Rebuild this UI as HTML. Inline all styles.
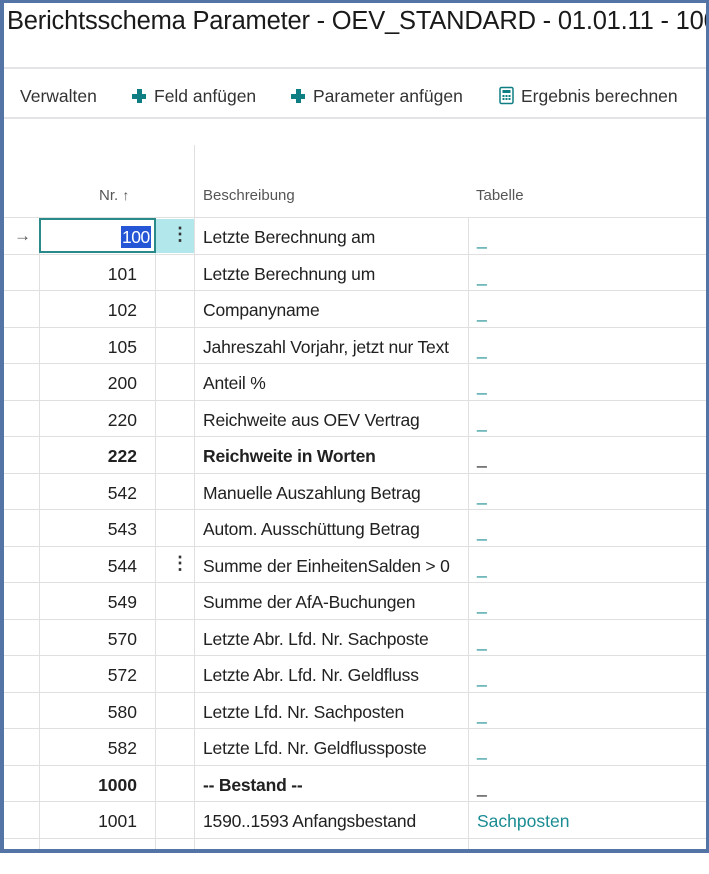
<!DOCTYPE html>
<html><head><meta charset="utf-8"><style>
*{margin:0;padding:0;box-sizing:border-box}
body{width:709px;height:853px;background:#fff;position:relative;overflow:hidden;font-family:"Liberation Sans",sans-serif;color:#212121}
.frame{position:absolute;left:0;top:0;width:709px;height:853px;border:4px solid #5574a6;border-right-width:3px;border-top-width:3px;z-index:10;pointer-events:none}
.title{position:absolute;left:7px;top:7px;font-size:25.5px;white-space:nowrap;color:#1a1a1a;letter-spacing:-0.2px}
.hl{position:absolute;left:4px;right:3px;height:2px;background:#e3e3e8}
.tb{position:absolute;top:86px;font-size:17.5px;white-space:nowrap;color:#333}
.plus{display:inline-block;position:relative;width:14px;height:14px;margin-right:8px;vertical-align:-1px}
.plus:before{content:"";position:absolute;left:4.5px;top:0;width:5px;height:14px;background:#0f7e83}
.plus:after{content:"";position:absolute;left:0;top:4.5px;width:14px;height:5px;background:#0f7e83}
.th{position:absolute;top:187px;font-size:15px;color:#555}
.vl{position:absolute;width:1px;background:#e0e0e0}
.row{position:absolute;left:4px;right:3px;height:36.5px;border-top:1.5px solid #e0e0e0}
.c{position:absolute;top:9px;font-size:17.5px;white-space:nowrap}
.b{font-weight:bold}
.t{color:#1a8c93}
</style></head><body>
<div class="frame"></div>
<div class="title">Berichtsschema Parameter - OEV_STANDARD - 01.01.11 - 1000</div>
<div class="hl" style="top:67px"></div>
<div class="tb" style="left:20px">Verwalten</div>
<div class="tb" style="left:132px"><span class="plus"></span>Feld anfügen</div>
<div class="tb" style="left:291px"><span class="plus"></span>Parameter anfügen</div>
<div class="tb" style="left:499px"><svg width="15" height="19" viewBox="0 0 15 18" style="vertical-align:-3px;margin-right:7px"><rect x="1" y="1" width="13" height="16" rx="1.5" fill="none" stroke="#0f7e83" stroke-width="1.5"/><rect x="3.5" y="3.5" width="8" height="3" fill="#0f7e83"/><g fill="#0f7e83"><rect x="3.5" y="8.5" width="2" height="2"/><rect x="6.5" y="8.5" width="2" height="2"/><rect x="9.5" y="8.5" width="2" height="2"/><rect x="3.5" y="11.5" width="2" height="2"/><rect x="6.5" y="11.5" width="2" height="2"/><rect x="9.5" y="11.5" width="2" height="2"/></g></svg>Ergebnis berechnen</div>
<div class="hl" style="top:117px"></div>
<div class="vl" style="left:194px;top:145px;height:72px"></div>
<div class="th" style="left:99px">Nr. <span style="font-size:14px">↑</span></div>
<div class="th" style="left:203px">Beschreibung</div>
<div class="th" style="left:476px">Tabelle</div>

<div id="rows"></div>
<div class="vl" style="left:39px;top:217px;height:632px"></div>
<div class="vl" style="left:155px;top:217px;height:632px"></div>
<div class="vl" style="left:194px;top:217px;height:632px"></div>
<div class="vl" style="left:468px;top:217px;height:632px"></div>

<div style="position:absolute;left:155px;top:219px;width:39px;height:34px;background:#b2e7ec"></div>
<div style="position:absolute;left:39px;top:218px;width:117px;height:35px;border:2px solid #2a8a8a;background:#fff"></div>
<div style="position:absolute;left:121px;top:226px;height:22px;background:#2456d6;color:#fff;font-size:17.5px;line-height:22px;padding:0 1px;letter-spacing:-0.5px">100</div>
<div style="position:absolute;left:14px;top:226px;font-size:17px;color:#555">→</div>
<div style="position:absolute;left:171px;top:224px;font-size:18px;font-weight:bold;color:#333">⋮</div>
<div style="position:absolute;left:171px;top:553px;font-size:18px;font-weight:bold;color:#333">⋮</div>

<script>
var d=[["100","Letzte Berechnung am","_"],["101","Letzte Berechnung um","_"],["102","Companyname","_"],["105","Jahreszahl Vorjahr, jetzt nur Text","_"],["200","Anteil %","_"],["220","Reichweite aus OEV Vertrag","_"],["222","Reichweite in Worten","_",1],["542","Manuelle Auszahlung Betrag","_"],["543","Autom. Ausschüttung Betrag","_"],["544","Summe der EinheitenSalden > 0","_"],["549","Summe der AfA-Buchungen","_"],["570","Letzte Abr. Lfd. Nr. Sachposte","_"],["572","Letzte Abr. Lfd. Nr. Geldfluss","_"],["580","Letzte Lfd. Nr. Sachposten","_"],["582","Letzte Lfd. Nr. Geldflussposte","_"],["1000","-- Bestand --","_",1],["1001","1590..1593 Anfangsbestand","Sachposten"],["","",""]];
var h="";
d.forEach(function(r,i){
var y=217+i*36.5;
var num=i==0?"":r[0];
var tc=r[3]?"color:#222":"";
var ty=r[2]=="_"?"top:11px;":"";
h+='<div class="row" style="top:'+y+'px"><div class="c '+(r[3]?'b':'')+'" style="left:36px;width:97px;text-align:right">'+num+'</div><div class="c '+(r[3]?'b':'')+'" style="left:199px;letter-spacing:-0.2px">'+r[1]+'</div><div class="c t" style="left:473px;'+ty+tc+'">'+r[2]+'</div></div>';
});
document.getElementById("rows").innerHTML=h;
</script>
</body></html>
